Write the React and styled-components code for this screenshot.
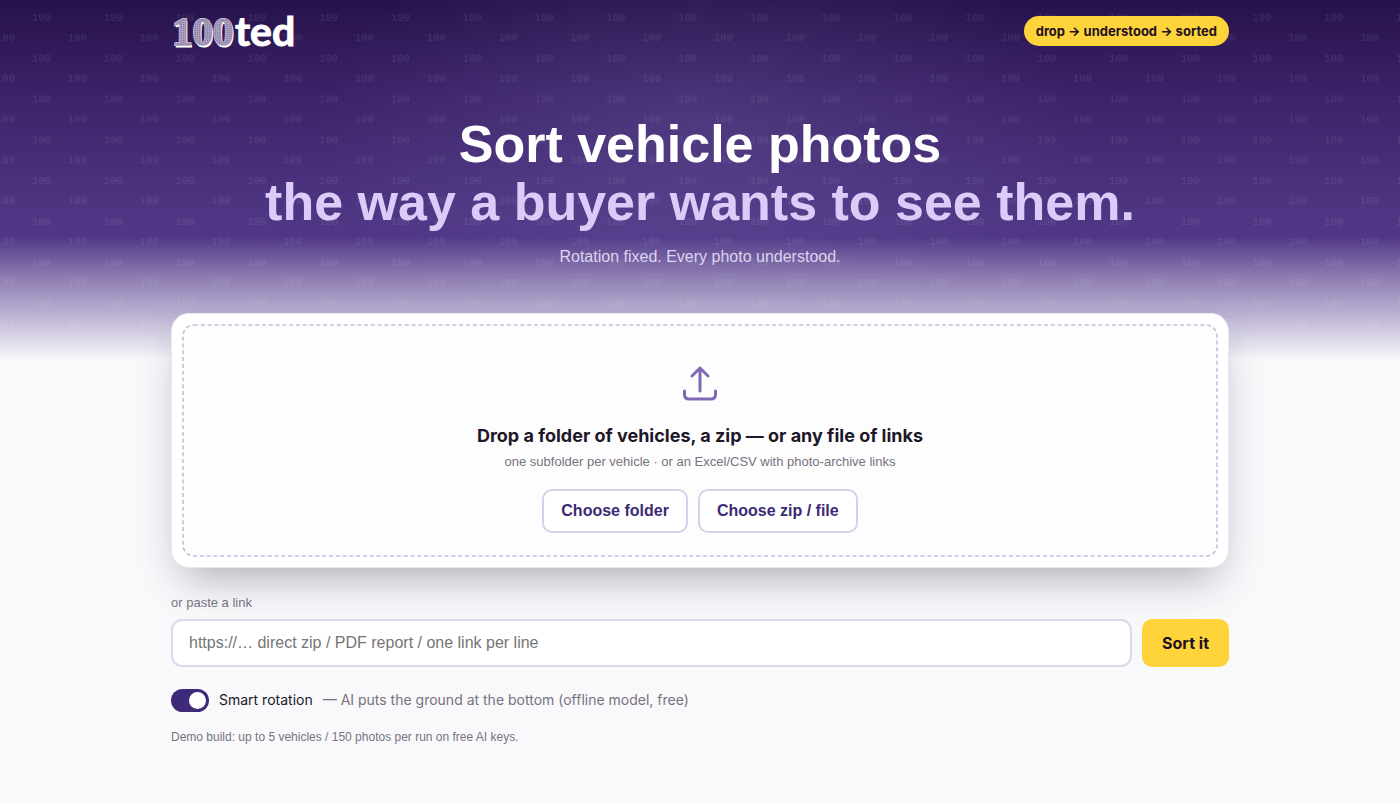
import React, { useState } from 'react';
import styled, { createGlobalStyle } from 'styled-components';

const GlobalStyle = createGlobalStyle`
  * {
    box-sizing: border-box;
  }

  body {
    margin: 0;
    background-color: #f9f9fc;
    color: #1d1728;
    font-family: 'Liberation Sans', sans-serif;
  }
`;

const Page = styled.div`
  position: relative;
  min-height: 100vh;
`;

const Backdrop = styled.div`
  position: absolute;
  inset: 0 0 auto;
  height: 360px;
  background:
    radial-gradient(ellipse 380px 220px at 50% 34%, rgba(130, 130, 190, 0.2), transparent),
    linear-gradient(180deg, #26134b 0%, #3c2268 26%, #4f3684 60%, #573e90 100%);
  mask-image: linear-gradient(180deg, #000 66%, rgba(0, 0, 0, 0.68) 76%, rgba(0, 0, 0, 0.36) 88%, transparent);

  svg {
    display: block;
    width: 100%;
    height: 100%;
  }
`;

const Container = styled.div`
  position: relative;
  width: 100%;
  max-width: 1106px;
  margin: 0 auto;
  padding: 0 24px;
`;

const TopBar = styled.header`
  display: flex;
  align-items: center;
  justify-content: space-between;
  height: 62px;
`;

const Logo = styled.a`
  display: flex;

  svg {
    display: block;
  }
`;

const Tagline = styled.span`
  padding: 0 12px;
  border-radius: 15px;
  background-color: #ffd43b;
  color: #24101f;
  font-family: Inter, sans-serif;
  font-size: 13px;
  font-weight: 700;
  line-height: 30px;
`;

const Hero = styled.section`
  padding: 53px 0 43px;
  text-align: center;
`;

const Title = styled.h1`
  margin: 0;
  color: #ffffff;
  font-size: 52px;
  font-weight: 700;
  line-height: 58px;
`;

const TitleAccent = styled.span`
  display: block;
  color: #dccbf8;
`;

const Subtitle = styled.p`
  margin: 13px 0 0;
  color: #dfd5ef;
  font-size: 16px;
  line-height: 26px;
`;

const Card = styled.section`
  padding: 10px;
  border: 1px solid #ebe8f3;
  border-radius: 18px;
  background-color: #ffffff;
  box-shadow: 0 20px 44px -12px rgba(38, 20, 50, 0.36);
`;

const DropZone = styled.div`
  position: relative;
  display: flex;
  flex-direction: column;
  align-items: center;
  padding: 40px 24px 24px;
  border-radius: 12px;
  background-color: #fdfdfe;
`;

const DashedFrame = styled.svg`
  position: absolute;
  inset: 1px;
  width: calc(100% - 2px);
  height: calc(100% - 2px);
  overflow: visible;
  pointer-events: none;
`;

const DropTitle = styled.h2`
  margin: 18px 0 0;
  font-family: Inter, sans-serif;
  font-size: 18px;
  font-weight: 700;
  line-height: 28px;
`;

const DropHint = styled.p`
  margin: 2px 0 0;
  color: #78727f;
  font-size: 13px;
  line-height: 20px;
`;

const ButtonRow = styled.div`
  display: flex;
  gap: 10px;
  margin-top: 17px;
`;

const OutlineButton = styled.button`
  height: 44px;
  padding: 0 17px;
  border: 2px solid #d6d0e8;
  border-radius: 10px;
  background-color: #ffffff;
  color: #3b2a75;
  font: 700 16px 'Liberation Sans', sans-serif;
  cursor: pointer;
`;

const LinkLabel = styled.label`
  display: block;
  margin-top: 25px;
  color: #78727f;
  font-size: 13px;
  line-height: 20px;
`;

const LinkRow = styled.form`
  display: flex;
  gap: 10px;
  margin-top: 6px;
`;

const LinkInput = styled.input`
  flex: 1;
  min-width: 0;
  height: 48px;
  padding: 0 16px;
  border: 2px solid #dcd8ec;
  border-radius: 11px;
  background-color: #ffffff;
  color: #1d1728;
  font: 400 16px 'Liberation Sans', sans-serif;

  &::placeholder {
    color: #757575;
    opacity: 1;
  }
`;

const SubmitButton = styled.button`
  height: 48px;
  padding: 0 20px;
  border: none;
  border-radius: 10px;
  background-color: #ffd43b;
  color: #1d1020;
  font: 700 16px Inter, sans-serif;
  cursor: pointer;
`;

const ToggleRow = styled.label`
  display: flex;
  align-items: center;
  gap: 10px;
  width: fit-content;
  margin-top: 21px;
  font-family: Inter, sans-serif;
  font-size: 14px;
  line-height: 24px;
  cursor: pointer;
`;

const Toggle = styled.input`
  appearance: none;
  display: flex;
  align-items: center;
  width: 38px;
  height: 23px;
  margin: 0;
  padding: 3px;
  border-radius: 12px;
  background-color: #c9c4d8;
  cursor: pointer;

  &::before {
    content: '';
    width: 17px;
    height: 17px;
    border-radius: 50%;
    background-color: #ffffff;
  }

  &:checked {
    justify-content: flex-end;
    background-color: #3f2a7a;
  }
`;

const ToggleNote = styled.span`
  color: #78727f;
`;

const Footnote = styled.p`
  margin: 15px 0 0;
  color: #78727f;
  font-size: 12px;
  line-height: 20px;
`;

const Watermark = () => (
  <svg aria-hidden="true">
    <defs>
      <pattern id="hundreds" width="71.8" height="40.8" patternUnits="userSpaceOnUse">
        <g fill="#ffffff" fillOpacity="0.1" fontFamily="Liberation Mono, monospace" fontSize="10.5">
          <text x="32" y="20.5">100</text>
          <text x="-4" y="40.8">100</text>
          <text x="67.8" y="40.8">100</text>
        </g>
      </pattern>
    </defs>
    <rect width="100%" height="100%" fill="url(#hundreds)" />
  </svg>
);

const BrandMark = () => (
  <svg width="128" height="58" viewBox="0 0 128 58" role="img" aria-label="100ted">
    <defs>
      <pattern id="engraving" width="2" height="2" patternUnits="userSpaceOnUse">
        <rect width="2" height="2" fill="#aba0bd" />
        <rect width="1" height="1" fill="#85779f" />
      </pattern>
    </defs>
    <g fontFamily="Liberation Serif, serif" fontSize="41" fontWeight="700">
      <text x="2" y="45" fill="#ffffff" stroke="#ffffff" strokeWidth="1">100</text>
      <text x="1" y="43" fill="url(#engraving)" stroke="#e6e0ef" strokeWidth="2" paintOrder="stroke">100</text>
      <text x="1" y="43" fill="url(#engraving)" stroke="#9a8db0" strokeWidth="0.8">100</text>
    </g>
    <text x="64" y="44" fill="#ffffff" stroke="#ffffff" strokeWidth="1" fontFamily="Lato, sans-serif" fontSize="41" fontWeight="700">ted</text>
  </svg>
);

const UploadIcon = () => (
  <svg
    width="36"
    height="40"
    viewBox="0 0 36 40"
    fill="none"
    stroke="#8069b4"
    strokeWidth="3"
    strokeLinecap="round"
    strokeLinejoin="round"
    aria-hidden="true"
  >
    <path d="M18 27V4M10 12L18 4L26 12" />
    <path d="M2.5 27V30.5Q2.5 35 7 35H29Q33.5 35 33.5 30.5V27" />
  </svg>
);

const App = () => {
  const [link, setLink] = useState('');
  const [smartRotation, setSmartRotation] = useState(true);

  return (
    <Page>
      <GlobalStyle />
      <Backdrop>
        <Watermark />
      </Backdrop>

      <Container>
        <TopBar>
          <Logo href="/">
            <BrandMark />
          </Logo>
          <Tagline>drop → understood → sorted</Tagline>
        </TopBar>

        <main>
          <Hero>
            <Title>
              Sort vehicle photos
              <TitleAccent>the way a buyer wants to see them.</TitleAccent>
            </Title>
            <Subtitle>Rotation fixed. Every photo understood.</Subtitle>
          </Hero>

          <Card>
            <DropZone>
              <DashedFrame aria-hidden="true">
                <rect
                  width="100%"
                  height="100%"
                  rx="11"
                  fill="none"
                  stroke="#c5bedb"
                  strokeWidth="1.6"
                  strokeDasharray="4 2.8"
                />
              </DashedFrame>
              <UploadIcon />
              <DropTitle>Drop a folder of vehicles, a zip — or any file of links</DropTitle>
              <DropHint>one subfolder per vehicle · or an Excel/CSV with photo-archive links</DropHint>
              <ButtonRow>
                <OutlineButton type="button">Choose folder</OutlineButton>
                <OutlineButton type="button">Choose zip / file</OutlineButton>
              </ButtonRow>
            </DropZone>
          </Card>

          <LinkLabel htmlFor="link">or paste a link</LinkLabel>
          <LinkRow onSubmit={(e) => e.preventDefault()}>
            <LinkInput
              id="link"
              type="text"
              value={link}
              onChange={(e) => setLink(e.target.value)}
              placeholder="https://… direct zip / PDF report / one link per line"
            />
            <SubmitButton type="submit">Sort it</SubmitButton>
          </LinkRow>

          <ToggleRow>
            <Toggle
              type="checkbox"
              role="switch"
              checked={smartRotation}
              onChange={(e) => setSmartRotation(e.target.checked)}
            />
            Smart rotation
            <ToggleNote>— AI puts the ground at the bottom (offline model, free)</ToggleNote>
          </ToggleRow>

          <Footnote>Demo build: up to 5 vehicles / 150 photos per run on free AI keys.</Footnote>
        </main>
      </Container>
    </Page>
  );
};

export default App;
